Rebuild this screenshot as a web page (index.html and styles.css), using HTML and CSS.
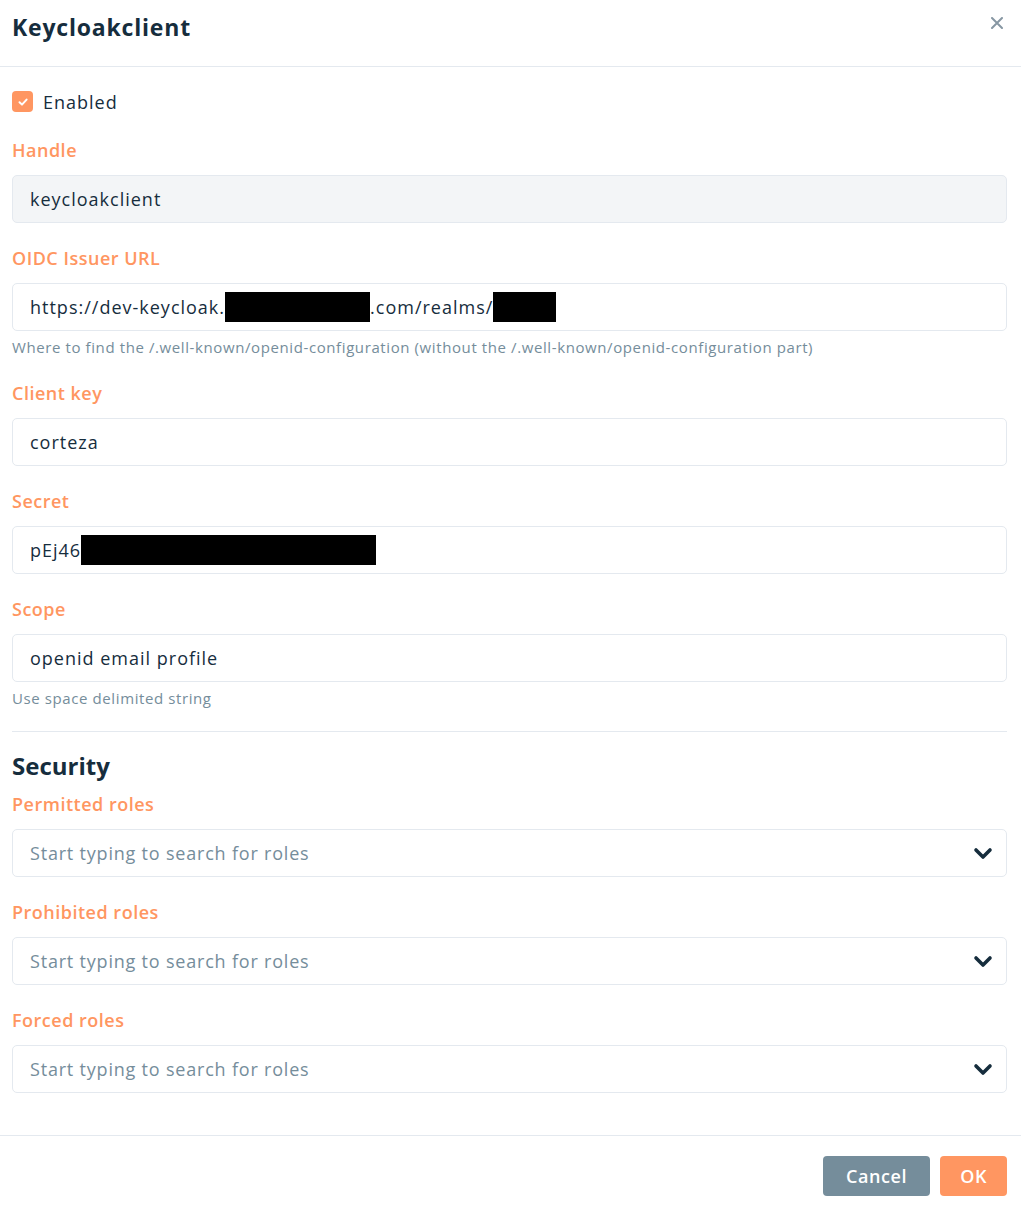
FILE: index.html
```html
<!DOCTYPE html>
<html lang="en">
<head>
    <meta charset="UTF-8">
    <meta name="viewport" content="width=device-width, initial-scale=1.0">
    <title>Keycloakclient</title>
    <link rel="stylesheet" href="styles.css">
</head>
<body>
    <div class="modal">
        <header class="modal-header">
            <h1 class="modal-title">Keycloakclient</h1>
            <button class="close-button" aria-label="Close">
                <svg width="12" height="12" viewBox="0 0 12 12"><path d="M1 1 L11 11 M11 1 L1 11" stroke="#8797a3" stroke-width="2" stroke-linecap="round"/></svg>
            </button>
        </header>

        <div class="modal-body">
            <label class="check-row">
                <span class="checkbox">
                    <svg width="12" height="12" viewBox="0 0 12 12"><path d="M2.5 6.2 L5 8.6 L9.6 3.6" fill="none" stroke="#fff" stroke-width="2" stroke-linecap="round" stroke-linejoin="round"/></svg>
                </span>
                <span class="check-label">Enabled</span>
            </label>

            <div class="form-group">
                <div class="field-label">Handle</div>
                <div class="field-input disabled">keycloakclient</div>
            </div>

            <div class="form-group">
                <div class="field-label">OIDC Issuer URL</div>
                <div class="field-input">https://dev-keycloak.<span class="redact redact-domain"></span>.com/realms/<span class="redact redact-realm"></span></div>
                <div class="help-text">Where to find the /.well-known/openid-configuration (without the /.well-known/openid-configuration part)</div>
            </div>

            <div class="form-group">
                <div class="field-label">Client key</div>
                <div class="field-input">corteza</div>
            </div>

            <div class="form-group">
                <div class="field-label">Secret</div>
                <div class="field-input">pEj46<span class="redact redact-secret"></span></div>
            </div>

            <div class="form-group">
                <div class="field-label">Scope</div>
                <div class="field-input">openid email profile</div>
                <div class="help-text">Use space delimited string</div>
            </div>

            <hr class="divider">

            <h2 class="section-title">Security</h2>

            <div class="form-group">
                <div class="field-label">Permitted roles</div>
                <div class="field-input select">
                    <span class="placeholder">Start typing to search for roles</span>
                    <svg class="chevron" width="20" height="14" viewBox="0 0 20 14"><path d="M3 4 L10 11 L17 4" fill="none" stroke="#162d3d" stroke-width="3.6" stroke-linecap="round" stroke-linejoin="round"/></svg>
                </div>
            </div>

            <div class="form-group">
                <div class="field-label">Prohibited roles</div>
                <div class="field-input select">
                    <span class="placeholder">Start typing to search for roles</span>
                    <svg class="chevron" width="20" height="14" viewBox="0 0 20 14"><path d="M3 4 L10 11 L17 4" fill="none" stroke="#162d3d" stroke-width="3.6" stroke-linecap="round" stroke-linejoin="round"/></svg>
                </div>
            </div>

            <div class="form-group">
                <div class="field-label">Forced roles</div>
                <div class="field-input select">
                    <span class="placeholder">Start typing to search for roles</span>
                    <svg class="chevron" width="20" height="14" viewBox="0 0 20 14"><path d="M3 4 L10 11 L17 4" fill="none" stroke="#162d3d" stroke-width="3.6" stroke-linecap="round" stroke-linejoin="round"/></svg>
                </div>
            </div>
        </div>

        <footer class="modal-footer">
            <button class="btn btn-cancel">Cancel</button>
            <button class="btn btn-ok">OK</button>
        </footer>
    </div>
</body>
</html>
```

FILE: styles.css
```css
:root {
    --primary-color: #ff9661;
    --text-color: #162d3d;
    --muted-color: #758d9b;
    --border-color: #e4e9ef;
    --disabled-bg: #f3f5f7;
}

body {
    margin: 0;
    background: #ffffff;
    color: var(--text-color);
    font-family: 'Open Sans', sans-serif;
}

.modal {
    width: 1021px;
}

.modal-header {
    display: flex;
    justify-content: space-between;
    align-items: flex-start;
    height: 66px;
    padding: 0 12px;
    border-bottom: 1px solid var(--border-color);
}

.modal-title {
    margin: 12px 0 0;
    font-size: 23px;
    line-height: 30px;
    font-weight: 700;
    letter-spacing: 0.8px;
}

.close-button {
    margin: 17px 6px 0 0;
    padding: 0;
    border: none;
    background: transparent;
    cursor: pointer;
}

.modal-body {
    padding: 21px 14px 42px 12px;
}

.check-row {
    display: flex;
    align-items: center;
    gap: 10px;
    height: 27px;
}

.checkbox {
    display: flex;
    align-items: center;
    justify-content: center;
    width: 21px;
    height: 21px;
    border-radius: 4px;
    background: var(--primary-color);
}

.check-label {
    font-size: 18px;
    letter-spacing: 1px;
}

.form-group {
    margin-top: 22px;
}

.field-label {
    color: var(--primary-color);
    font-size: 18px;
    line-height: 27px;
    font-weight: 600;
    letter-spacing: 0.5px;
    margin-bottom: 11px;
}

.field-input {
    display: flex;
    align-items: center;
    height: 46px;
    padding: 0 17px;
    border: 1px solid var(--border-color);
    border-radius: 5px;
    font-size: 18px;
    letter-spacing: 1px;
    white-space: nowrap;
}

.field-input.disabled {
    background: var(--disabled-bg);
}

.field-input.select {
    justify-content: space-between;
    padding-right: 13px;
    letter-spacing: 0.8px;
}

.placeholder {
    color: var(--muted-color);
}

.redact {
    display: inline-block;
    height: 30px;
    background: #000000;
}

.redact-domain {
    width: 145px;
}

.redact-realm {
    width: 63px;
}

.redact-secret {
    width: 295px;
}

.help-text {
    margin-top: 5px;
    font-size: 15px;
    line-height: 22px;
    letter-spacing: 0.6px;
    color: var(--muted-color);
}

.divider {
    margin: 22px 0 0;
    border: none;
    border-top: 1px solid var(--border-color);
}

.section-title {
    margin: 19px 0 0;
    font-size: 24px;
    line-height: 30px;
    font-weight: 700;
}

.section-title + .form-group {
    margin-top: 10px;
}

.modal-footer {
    display: flex;
    justify-content: flex-end;
    gap: 10px;
    padding: 20px 14px 10px;
    border-top: 1px solid var(--border-color);
}

.btn {
    height: 40px;
    padding: 0 20px;
    border: none;
    border-radius: 4px;
    color: #ffffff;
    font-family: inherit;
    font-size: 18px;
    font-weight: 600;
    letter-spacing: 0.6px;
    cursor: pointer;
}

.btn-cancel {
    padding: 0 23px;
    background: var(--muted-color);
}

.btn-ok {
    background: var(--primary-color);
}
```
